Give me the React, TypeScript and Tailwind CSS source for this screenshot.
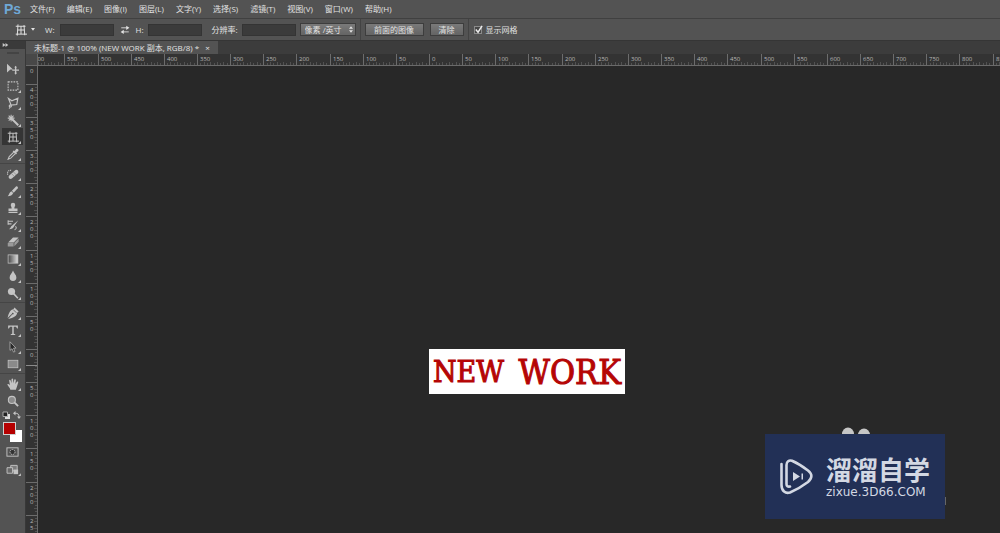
import React from 'react';

const ZOOM = 0.663; // screen pixels per ruler unit

const menus = [
  '文件(F)',
  '编辑(E)',
  '图像(I)',
  '图层(L)',
  '文字(Y)',
  '选择(S)',
  '滤镜(T)',
  '视图(V)',
  '窗口(W)',
  '帮助(H)',
];

interface Tool {
  name: string;
  art: React.ReactNode;
  single?: boolean;
}

const line = { fill: 'none', stroke: 'currentColor', strokeWidth: 1.4 };

const cropArt = (
  <g {...line} strokeWidth={1.3}>
    <path d="M4 .5L3 15.500M12 1.500l1 13.500M1 3h13M1 13.500h15M8 3v10.500M3.500 8h9" />
  </g>
);

const toolGroups: Tool[][] = [
  [
    {
      name: '移动工具',
      single: true,
      art: (
        <>
          <path d="M0 1l8 7.500-3.500.3L0 12.500z" fill="currentColor" />
          <path d="M11.500 5v9M7 9.500h9" {...line} strokeWidth={1.8} />
          <path d="M11.500 3.500l1.800 2.500H9.700zM11.500 15.500l1.800-2.500H9.700z" fill="currentColor" />
        </>
      ),
    },
    {
      name: '矩形选框工具',
      art: <rect x="1.500" y="2.500" width="13" height="11" {...line} strokeDasharray="2.200 1.400" />,
    },
    {
      name: '多边形套索工具',
      art: (
        <path
          d="M2 2l4.500 3L14.500 1.500 13 10l-7.500.8L2 2zM5.500 10.500c-2-.5-3.500 2-1.500 2.700s2.200-1.500 1.500-2.700M4 13l-1 2.500"
          {...line}
          strokeWidth={1.6}
        />
      ),
    },
    {
      name: '魔棒工具',
      art: (
        <>
          <path d="M7 7l8 8" {...line} strokeWidth={2.6} />
          <path d="M5.500 1v9M1 5.500h9M2.300 2.300l6.400 6.400M8.700 2.300L2.300 8.700" {...line} />
        </>
      ),
    },
    { name: '透视裁剪工具', art: cropArt },
    {
      name: '吸管工具',
      art: (
        <>
          <path d="M9 5.500L3 11.500 1.500 15l3.500-1.500L11 7.500" {...line} />
          <path
            d="M7.500 4.500l1.300-1.300 1.400.8L12 1.500c1.700-1.600 4.600 1 2.800 2.900L12.500 6l.8 1.400-1.400 1.400z"
            fill="currentColor"
          />
        </>
      ),
    },
  ],
  [
    {
      name: '修复画笔工具',
      art: (
        <>
          <path d="M3 10L10.500 3.200c2.600-2.200 6.200 1.200 3.900 3.800L6.500 14C4 16 .6 12.600 3 10z" fill="currentColor" />
          <path d="M1 9C-.5 5 3 2 6.500 3.500" {...line} strokeDasharray="1.500 1" />
          <path d="M6 7.500l4 4M8.500 5.200l4 4" stroke="#7a7a7a" strokeWidth=".8" />
        </>
      ),
    },
    {
      name: '画笔工具',
      art: (
        <>
          <path d="M6.500 7.500L12 2c1.300-1.100 3.400.8 2.300 2.200L9 10.200z" fill="currentColor" />
          <path d="M5.800 8.300l2.500 2.500C7 14 4.500 15 1 15c2-1.700 2-5.500 4.800-6.700z" fill="currentColor" />
        </>
      ),
    },
    {
      name: '仿制图章工具',
      art: (
        <path
          d="M8 1a3 3 0 0 1 3 3c0 1.800-1.200 2.300-1.200 4.500H14V12H2V8.500h4.200C6.200 6.300 5 5.800 5 4a3 3 0 0 1 3-3zM2 13h12v1.500H2z"
          fill="currentColor"
        />
      ),
    },
    {
      name: '历史记录画笔工具',
      art: (
        <>
          <path d="M15 1.500L9.500 9.500c-1 2.800-3 4-7 4 2.300-1 2.300-4 4.500-5z" fill="currentColor" />
          <path d="M2 3h6M2 6.500h4M1.500 1.500v6M11 10c2 .5 2 3.500-1 4.500" {...line} />
        </>
      ),
    },
    {
      name: '橡皮擦工具',
      art: (
        <>
          <path d="M8 2h7.500L9 8.500H1.500z" fill="currentColor" />
          <path d="M1 9.300h7.800V14H1zM9.800 9L15.500 3.300v4.500L9.800 13.500z" fill="#9a9a9a" />
        </>
      ),
    },
    {
      name: '渐变工具',
      art: (
        <>
          <defs>
            <linearGradient id="ramp">
              <stop offset="0" stopColor="#444" />
              <stop offset="1" stopColor="#ddd" />
            </linearGradient>
          </defs>
          <rect x="1.500" y="2.500" width="13" height="11" fill="url(#ramp)" stroke="currentColor" />
        </>
      ),
    },
    {
      name: '模糊工具',
      art: <path d="M8 .5c1 3.500 4.500 5.500 4.500 9.500a4.500 4.500 0 0 1-9 0c0-4 3.500-6 4.500-9.500z" fill="currentColor" />,
    },
    {
      name: '减淡工具',
      art: (
        <>
          <circle cx="6" cy="6" r="4.800" fill="currentColor" />
          <path d="M8.500 8.500l6 6.500" {...line} strokeWidth={2} />
        </>
      ),
    },
  ],
  [
    {
      name: '钢笔工具',
      art: (
        <>
          <path
            d="M10 .5L15.500 6l-2 1.500C13.500 11.500 9 14 1.500 16l5.500-6-.8-.8L.8 14.500C2.500 7.500 4.500 3.500 8.500 3z"
            fill="currentColor"
          />
          <path d="M8.500 3.700l4 4" stroke="#535353" />
          <circle cx="7.700" cy="8.800" r="1.200" fill="#535353" />
        </>
      ),
    },
    {
      name: '横排文字工具',
      art: <path d="M1.500 2h13v4h-1L12 3.500H9V13l2 .5v1H5v-1l2-.5V3.500H4L2.500 6h-1z" fill="currentColor" />,
    },
    {
      name: '路径选择工具',
      art: (
        <path
          d="M4 1l8 8.500H8.700l2 4.500-2 .8-2-4.500L4 12.500z"
          fill="#292929"
          stroke="currentColor"
          strokeWidth=".9"
        />
      ),
    },
    {
      name: '矩形工具',
      art: <rect x="1.500" y="3" width="13" height="10" fill="#8a8a8a" stroke="currentColor" />,
    },
  ],
  [
    {
      name: '抓手工具',
      art: (
        <path
          d="M4.500 15.500C4 13 1.300 10.300.5 8.500c.8-1.200 2.200-.2 3.500 1L2.800 3.300c.3-1.300 1.700-1.300 2.100 0L6 7 6 1.700c.3-1.300 1.900-1.300 2.200 0L8.400 7l1.400-4.700c.5-1.200 2-.7 2 .6L11.100 8l2.100-3c.9-.9 2.200-.2 1.700 1.100C14 9 13.300 12.500 11.800 15.500z"
          fill="currentColor"
        />
      ),
    },
    {
      name: '缩放工具',
      single: true,
      art: (
        <>
          <circle cx="6.500" cy="6.500" r="4.700" fill="#8c8c8c" stroke="currentColor" strokeWidth="1.400" />
          <path d="M9.800 9.800l5 5" {...line} strokeWidth={2.4} />
        </>
      ),
    },
  ],
];

function Icon({ children }: { children: React.ReactNode }) {
  return (
    <svg viewBox="0 0 16 16" className="h-3 w-3 shrink-0" aria-hidden="true">
      {children}
    </svg>
  );
}

function MenuBar() {
  return (
    <nav className="flex h-[19px] items-center border-b border-[#404040] pl-1">
      <span className="w-[26px] font-['Liberation_Sans',sans-serif] text-[14px] leading-none font-bold text-[#6fa8d6]">
        Ps
      </span>
      <div className="flex gap-3">
        {menus.map((m) => (
          <button key={m} className="whitespace-nowrap">
            {m}
          </button>
        ))}
      </div>
    </nav>
  );
}

const field = 'h-3 w-[54px] border border-[#343434] bg-[#3b3b3b] px-1 outline-none';
const divider = 'h-[21px] w-px shrink-0 bg-[#434343]';
const raised =
  'flex h-[13px] items-center justify-center border border-[#3d3d3d] bg-gradient-to-b from-[#7a7a7a] to-[#646464] whitespace-nowrap';

function OptionsBar() {
  return (
    <div className="flex h-[22px] items-center border-b border-[#353535] pl-[15px] whitespace-nowrap">
      <button className="flex w-[30px] items-center gap-1" aria-label="工具预设">
        <Icon>{cropArt}</Icon>
        <svg viewBox="0 0 6 4" className="w-1">
          <path d="M0 0h6L3 4z" fill="currentColor" />
        </svg>
      </button>
      <label className="flex items-center gap-[5px]">
        W:
        <input className={field} />
      </label>
      <button className="ml-1.5" aria-label="互换宽高">
        <svg viewBox="0 0 16 16" className="h-2.5 w-2.5">
          <path d="M2 4.500h10M14 11H4" {...line} />
          <path d="M10 1l5 3.500L10 8zM6 7.500L1 11l5 3.500z" fill="currentColor" />
        </svg>
      </button>
      <label className="ml-1.5 flex items-center gap-1">
        H:
        <input className={field} />
      </label>
      <label className="ml-[10px] flex items-center gap-1">
        分辨率:
        <input className={field} />
      </label>
      <div className="relative ml-1">
        <select
          aria-label="分辨率单位"
          className="block h-[13px] w-14 appearance-none border border-[#3d3d3d] bg-gradient-to-b from-[#7a7a7a] to-[#646464] pl-1 leading-none"
        >
          <option>像素 /英寸</option>
        </select>
        <svg viewBox="0 0 6 10" className="pointer-events-none absolute top-[3px] right-[3px] h-[7px] w-1">
          <path d="M0 4l3-4 3 4zM0 6h6l-3 4z" fill="currentColor" />
        </svg>
      </div>
      <span className={`ml-1 ${divider}`} />
      <button className={`ml-1 w-[59px] ${raised}`}>前面的图像</button>
      <button className={`ml-1.5 w-[34px] ${raised}`}>清除</button>
      <span className={`ml-1 ${divider}`} />
      <label className="ml-[5px] flex items-center gap-1">
        <span className="relative flex">
          <input
            type="checkbox"
            defaultChecked
            className="peer h-2 w-2 appearance-none border border-[#8a8a8a] bg-[#474747]"
          />
          <svg
            viewBox="0 0 10 10"
            className="pointer-events-none absolute -top-px left-0 hidden h-[9px] w-[9px] peer-checked:block"
          >
            <path d="M2 5l2.500 3L9 1" fill="none" stroke="#eee" strokeWidth="1.600" />
          </svg>
        </span>
        显示网格
      </label>
    </div>
  );
}

function Toolbar() {
  return (
    <aside className="flex w-[26px] shrink-0 flex-col border-r border-[#383838] bg-[#535353]">
      <div className="h-2 bg-[#3a3a3a] pl-0.5">
        <svg viewBox="0 0 10 8" className="h-2 w-[7px]">
          <path d="M1 1l4 3-4 3zM5 1l4 3-4 3z" fill="#c8c8c8" />
        </svg>
      </div>
      <div className="mx-auto mt-[3px] mb-1.5 h-0.5 w-3 bg-[#444]" />
      {toolGroups.map((group, i) => (
        <div key={i} className={i ? 'mt-px border-t border-[#454545] pt-px' : ''}>
          {group.map((tool) => (
            <button
              key={tool.name}
              title={tool.name}
              className={`relative ml-0.5 flex h-[17px] w-[21px] items-center justify-center text-[#c4c4c4] ${
                tool.name === '透视裁剪工具' ? 'bg-[#353535]' : ''
              }`}
            >
              <Icon>{tool.art}</Icon>
              {!tool.single && (
                <svg viewBox="0 0 4 4" className="absolute right-0.5 bottom-px h-[3px] w-[3px]">
                  <path d="M4 0v4H0z" fill="currentColor" />
                </svg>
              )}
            </button>
          ))}
        </div>
      ))}
      <div className="mt-0.5 flex justify-between pr-1 pl-0.5 text-[#c4c4c4]">
        <button aria-label="默认颜色">
          <svg viewBox="0 0 8 8" className="h-2 w-2">
            <path d="M3 3h5v5H3z" fill="#ddd" />
            <path d="M1 1h4.500v4.500H1z" fill="#222" stroke="#aaa" />
          </svg>
        </button>
        <button aria-label="切换颜色">
          <svg viewBox="0 0 8 8" className="h-2 w-2">
            <path d="M2 2.200c3 0 4 1 4 4" fill="none" stroke="currentColor" />
            <path d="M0 2.200L2.500 0v4.400zM6 8L4 5.500h4z" fill="currentColor" />
          </svg>
        </button>
      </div>
      <div className="relative mt-[3px] ml-[3px] h-5 w-[19px]">
        <button aria-label="背景色" className="absolute right-0 bottom-0 h-3 w-3 bg-white" />
        <button
          aria-label="前景色"
          className="absolute top-0 left-0 h-[13px] w-[13px] border border-[#cfcfcf] bg-[#b50000]"
        />
      </div>
      <button title="快速蒙版" className="mt-1 ml-1.5 text-[#c4c4c4]">
        <svg viewBox="0 0 14 12" className="h-3 w-[13px]">
          <rect x="1" y="1.500" width="12" height="9" {...line} strokeWidth={1} />
          <circle cx="7" cy="6" r="2.700" fill="#333" stroke="currentColor" strokeDasharray="1.500 .8" />
        </svg>
      </button>
      <button title="屏幕模式" className="mt-1.5 ml-1.5 w-4 text-[#c4c4c4]">
        <svg viewBox="0 0 16 13" className="h-3 w-[15px]">
          <path d="M5 1.500h7v6H5z" fill="#7d7d7d" stroke="currentColor" />
          <path d="M1 4h6v6H1z" fill="#6a6a6a" stroke="currentColor" />
          <path d="M8 6h5v5H8z" fill="currentColor" />
          <path d="M16 10v3h-3z" fill="currentColor" />
        </svg>
      </button>
    </aside>
  );
}

// a tick every 5 units, with a label on each 50
function marks(from: number, origin: number, length: number) {
  const out: { unit: number; pos: number; major: boolean }[] = [];
  for (let unit = from; origin + unit * ZOOM < length; unit += 5) {
    out.push({ unit, pos: Math.round(origin + unit * ZOOM), major: unit % 50 === 0 });
  }
  return out;
}

function TopRuler() {
  return (
    <svg className="h-3 min-w-0 flex-1 border-b border-[#6a6a6a] bg-[#333]">
      {marks(-600, 391, window.innerWidth - 38).map(({ unit, pos, major }) => (
        <g key={unit}>
          <rect x={pos} y={major ? 0 : unit % 10 ? 9 : 8} width="1" height="12" fill={major ? '#6c6c6c' : '#525252'} />
          {major && (
            <text x={pos + 3} y="7" className="fill-[#b8b8b8] text-[6px]">
              {Math.abs(unit)}
            </text>
          )}
        </g>
      ))}
    </svg>
  );
}

function SideRuler() {
  return (
    <svg className="w-3 shrink-0 border-r border-[#6a6a6a] bg-[#333]">
      {marks(-400, 283, window.innerHeight - 66).map(({ unit, pos, major }) => (
        <g key={unit}>
          <rect x={major ? 0 : unit % 10 ? 9 : 8} y={pos} width="12" height="1" fill={major ? '#6c6c6c' : '#525252'} />
          {major &&
            String(Math.abs(unit))
              .split('')
              .map((digit, i) => (
                <text key={i} x="4" y={pos + 8 + i * 7} className="fill-[#b8b8b8] text-[6px]">
                  {digit}
                </text>
              ))}
        </g>
      ))}
      {/* last digit of the mark above the visible range */}
      <text x="4" y="7" className="fill-[#b8b8b8] text-[6px]">
        0
      </text>
      <rect y="299" width="12" height="1" fill="#8a8a8a" />
    </svg>
  );
}

function Watermark() {
  return (
    <div className="absolute right-[55px] bottom-[14px]">
      <svg viewBox="0 0 30 8" className="absolute -top-[7px] left-[76px] w-[30px]">
        <ellipse cx="7" cy="7" rx="6" ry="6.500" fill="#c6c6c6" />
        <ellipse cx="23" cy="8" rx="6" ry="6.500" fill="#c6c6c6" />
      </svg>
      <div className="relative flex h-[85px] w-[180px] items-center gap-[13px] bg-[#223056] pl-[14px] text-[#d3d8e3]">
        <svg viewBox="0 0 34 36" className="h-9 w-[34px] shrink-0">
          <g fill="none" stroke="currentColor" strokeWidth="2.600" strokeLinecap="round" strokeLinejoin="round">
            <path d="M2.500 5v21c0 6 4 9 8.500 7.500 6-2.500 12-6 18-10.500 4.500-4 4.500-8 0-11.500C23 7 18 4 13 1.800 10 .8 7.500 2.500 7.500 6v19c0 2 1.200 3 3.500 2.500" />
          </g>
          <path d="M14 13v9l7-4.500zM22.500 14.500h1.500v6h-1.500z" fill="currentColor" />
        </svg>
        <div className="whitespace-nowrap">
          <div className="font-['Noto_Sans_CJK_SC',sans-serif] text-[26px] leading-[26px] font-bold">溜溜自学</div>
          <div className="mt-1 font-['DejaVu_Sans',sans-serif] text-[12px] leading-3">zixue.3D66.COM</div>
        </div>
      </div>
      <span className="absolute -right-px bottom-[14px] h-2 w-px bg-[#666]" />
    </div>
  );
}

function Canvas() {
  return (
    <main className="relative min-w-0 flex-1 overflow-hidden bg-[#282828]">
      <div className="absolute top-[283px] left-[391px] flex h-[45px] w-[196px] items-center justify-between bg-white px-1 font-['DejaVu_Serif_Condensed','DejaVu_Serif',serif] leading-none text-[#b50505] [-webkit-text-stroke:1px_#b50505]">
        <span className="text-[30px]">NEW</span>
        <span className="text-[34px]">WORK</span>
      </div>
      <Watermark />
    </main>
  );
}

export default function App() {
  return (
    <div className="flex h-screen flex-col overflow-hidden bg-[#535353] font-['Open_Sans','Noto_Sans_CJK_SC',sans-serif] text-[8px] leading-none text-[#e2e2e2]">
      <MenuBar />
      <OptionsBar />
      <div className="flex min-h-0 flex-1">
        <Toolbar />
        <div className="flex min-w-0 flex-1 flex-col">
          <div className="flex h-[13px] shrink-0 bg-[#3c3c3c]">
            <div className="flex items-center gap-1.5 bg-[#535353] px-2 whitespace-nowrap">
              <span>未标题-1 @ 100% (NEW WORK 副本, RGB/8) *</span>
              <button aria-label="关闭">×</button>
            </div>
          </div>
          <div className="flex shrink-0">
            <div className="w-3 border-r border-b border-[#6a6a6a] bg-[#484848]" />
            <TopRuler />
          </div>
          <div className="flex min-h-0 flex-1">
            <SideRuler />
            <Canvas />
          </div>
        </div>
      </div>
    </div>
  );
}
